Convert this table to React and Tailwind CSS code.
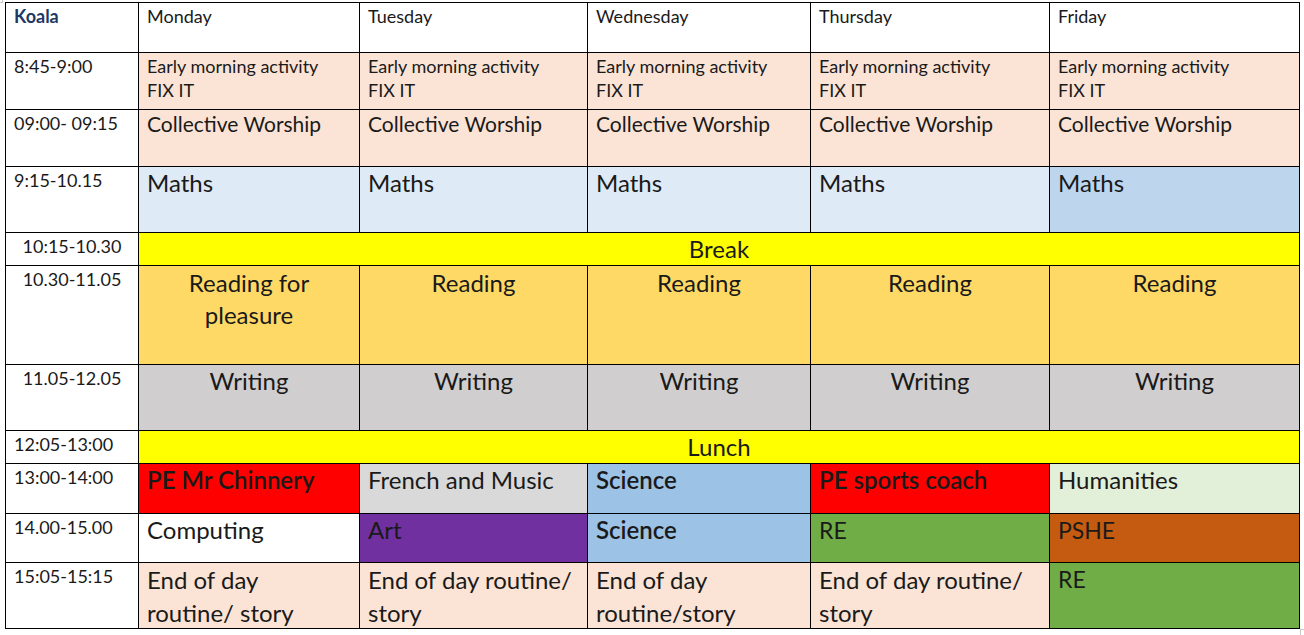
import React from "react";

const PEACH = "bg-[#fbe4d5]";
const INK = "text-[#1a1a1a]";

const days = ["Monday", "Tuesday", "Wednesday", "Thursday", "Friday"];

const rows = [
    {
        time: "8:45-9:00",
        cells: days.map(() => ({ bg: PEACH, size: "text-[18px] leading-[24px] pt-px", lines: ["Early morning activity", "FIX IT"] })),
    },
    {
        time: "09:00- 09:15",
        cells: days.map(() => ({ bg: PEACH, size: "text-[21px] leading-[28px]", lines: ["Collective Worship"] })),
    },
    {
        time: "9:15-10.15",
        cells: days.map((d) => ({
            bg: d === "Friday" ? "bg-[#bdd6ee]" : "bg-[#deeaf6]",
            size: "text-[24px] leading-[32px]",
            lines: ["Maths"],
        })),
    },
    { time: "10:15-10.30", center: true, span: "Break" },
    {
        time: "10.30-11.05",
        center: true,
        cells: days.map((d) => ({
            bg: "bg-[#ffd966]",
            size: "text-[24px] leading-[32px] pt-px",
            align: "text-center",
            lines: d === "Monday" ? ["Reading for", "pleasure"] : ["Reading"],
        })),
    },
    {
        time: "11.05-12.05",
        center: true,
        cells: days.map(() => ({ bg: "bg-[#d0cece]", size: "text-[24px] leading-[32px]", align: "text-center", lines: ["Writing"] })),
    },
    { time: "12:05-13:00", span: "Lunch" },
    {
        time: "13:00-14:00",
        cells: [
            { bg: "bg-[#ff0000]", size: "text-[24px] leading-[32px] font-semibold", lines: ["PE Mr Chinnery"] },
            { bg: "bg-[#d9d9d9]", size: "text-[24px] leading-[32px]", lines: ["French and Music"] },
            { bg: "bg-[#9cc2e5]", size: "text-[24px] leading-[32px] font-semibold", lines: ["Science"] },
            { bg: "bg-[#ff0000]", size: "text-[24px] leading-[32px] font-semibold", lines: ["PE sports coach"] },
            { bg: "bg-[#e2efd9]", size: "text-[24px] leading-[32px]", lines: ["Humanities"] },
        ],
    },
    {
        time: "14.00-15.00",
        cells: [
            { bg: "bg-white", size: "text-[24px] leading-[32px]", lines: ["Computing"] },
            { bg: "bg-[#7030a0]", size: "text-[24px] leading-[32px]", lines: ["Art"] },
            { bg: "bg-[#9cc2e5]", size: "text-[24px] leading-[32px] font-semibold", lines: ["Science"] },
            { bg: "bg-[#70ad47]", size: "text-[23px] leading-[32px]", lines: ["RE"] },
            { bg: "bg-[#c55a11]", size: "text-[23px] leading-[32px]", lines: ["PSHE"] },
        ],
    },
    {
        time: "15:05-15:15",
        cells: [
            { bg: PEACH, size: "text-[24px] leading-[33px]", lines: ["End of day", "routine/ story"] },
            { bg: PEACH, size: "text-[24px] leading-[33px]", lines: ["End of day routine/", "story"] },
            { bg: PEACH, size: "text-[24px] leading-[33px]", lines: ["End of day", "routine/story"] },
            { bg: PEACH, size: "text-[24px] leading-[33px]", lines: ["End of day routine/", "story"] },
            { bg: "bg-[#70ad47]", size: "text-[23px] leading-[32px]", lines: ["RE"] },
        ],
    },
];

const Cell = ({ bg, size, align = "text-left", lines }) => (
    <div className={`${bg} ${size} ${align} ${INK} px-2 whitespace-nowrap overflow-hidden`}>
        {lines.map((l, i) => (
            <div key={i}>{l}</div>
        ))}
    </div>
);

const App = () => {
    return (
        <div className="relative w-[1304px] h-[635px] bg-white overflow-hidden" style={{ fontFamily: "Lato, 'Open Sans', sans-serif" }}>
            {/* crop marks */}
            <div className="absolute left-0 top-0 w-[3px] h-[3px] border-r border-b border-[#c8c8c8]" />
            <div className="absolute left-[1300px] top-[629px] w-[6px] h-[8px] border-l border-t border-[#c8c8c8]" />

            <div className="ml-[5px] mt-[2px] inline-grid gap-px p-px bg-black grid-cols-[132px_220px_227px_222px_238px_249px] grid-rows-[49px_56px_56px_65px_32px_98px_65px_32px_49px_48px_65px]">
                <div className="bg-white px-2 pt-px text-[18px] leading-[24px] font-bold text-[#1f3864]">Koala</div>
                {days.map((d) => (
                    <div key={d} className={`bg-white px-2 pt-px text-[18px] leading-[24px] ${INK}`}>
                        {d}
                    </div>
                ))}

                {rows.map((r) => (
                    <React.Fragment key={r.time}>
                        <div className={`bg-white px-2 pt-px text-[18px] leading-[24px] ${INK} ${r.center ? "text-center" : ""}`}>{r.time}</div>
                        {r.span ? (
                            <div className={`col-span-5 bg-[#ffff00] text-center text-[24px] leading-[32px] ${INK}`}>{r.span}</div>
                        ) : (
                            r.cells.map((c, i) => <Cell key={i} {...c} />)
                        )}
                    </React.Fragment>
                ))}
            </div>
        </div>
    );
};

export default App;
